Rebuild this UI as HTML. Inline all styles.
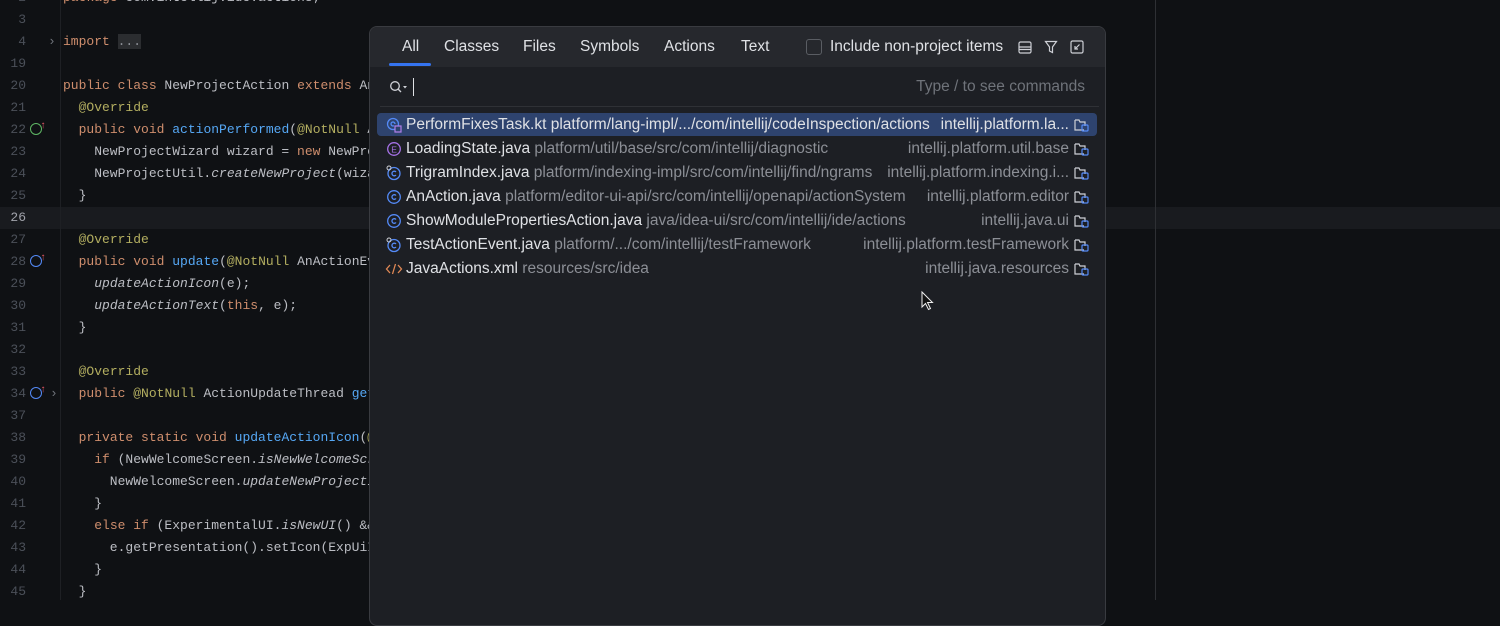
<!DOCTYPE html>
<html><head><meta charset="utf-8"><style>
*{margin:0;padding:0;box-sizing:border-box}
body{width:1500px;height:600px;background:#0f1114;overflow:hidden;position:relative;font-family:"Liberation Sans",sans-serif}
.ed{position:absolute;left:0;top:-13px;font-family:"Liberation Mono",monospace;font-size:13px;color:#bcbec4}
.ln{position:absolute;left:0;width:26px;text-align:right;color:#4b5059;font-size:13px}
.l{height:22px;line-height:22px;position:relative;white-space:pre}
.code{position:absolute;left:63px}
.k{color:#cf8e6d}.a{color:#b3ae60}.m{color:#56a8f5}.i{font-style:italic}
.gsep{position:absolute;left:60px;top:0;width:1px;height:600px;background:#1e2024}
.cur{position:absolute;left:0;top:207px;width:1500px;height:22px;background:#191b1f}
.vl{position:absolute;left:1155px;top:0;width:1px;height:600px;background:#2e3034}
.pop{position:absolute;left:369px;top:26px;width:737px;height:600px;background:#1d1f24;border:1px solid #393b40;border-radius:8px;overflow:hidden}
.hd{height:40px;background:#26282d;position:relative;font-size:15.5px;color:#dfe1e5}
.tab{position:absolute;top:11px}
.ul{position:absolute;left:19px;top:36px;width:42px;height:3px;background:#3574f0;border-radius:2px}
.srch{height:40px;border-bottom:1px solid #2f3136;position:relative;margin:0 6px 0 10px}
.row{position:absolute;left:7px;width:720px;height:23px;line-height:23px;font-size:15.5px;color:#dfe1e5;white-space:nowrap}
.row .p{color:#8c8f96}
.row .mod{position:absolute;right:28px;top:0;color:#8c8f96}
.row svg{position:absolute}
.sel{background:#2e436e;border-radius:4px}
.sel .p,.sel .mod{color:#dfe1e5}
</style></head><body>
<div class="cur"></div>
<div class="gsep"></div>
<div class="vl"></div>
<div class="ed">
<div class="l"><span class="ln">2</span><span class="code"><span class="k">package</span> com.intellij.ide.actions;</span></div>
<div class="l"><span class="ln">3</span></div>
<div class="l"><span class="ln">4</span><span style="position:absolute;left:48px;color:#6f737a">›</span><span class="code"><span class="k">import</span> <span style="background:#2b2d30;color:#8c8f96">...</span></span></div>
<div class="l"><span class="ln">19</span></div>
<div class="l"><span class="ln">20</span><span class="code"><span class="k">public class</span> NewProjectAction <span class="k">extends</span> AnAction {</span></div>
<div class="l"><span class="ln">21</span><span class="code">  <span class="a">@Override</span></span></div>
<div class="l"><span class="ln">22</span><span style="position:absolute;left:30px;top:4px;width:12px;height:12px;border:1.5px solid #5fb865;border-radius:50%"></span><span style="position:absolute;left:40px;top:-3px;color:#e55765;font-size:10px">↑</span><span class="code">  <span class="k">public void</span> <span class="m">actionPerformed</span>(<span class="a">@NotNull</span> AnActionEvent e) {</span></div>
<div class="l"><span class="ln">23</span><span class="code">    NewProjectWizard wizard = <span class="k">new</span> NewProjectWizard();</span></div>
<div class="l"><span class="ln">24</span><span class="code">    NewProjectUtil.<span class="i">createNewProject</span>(wizard);</span></div>
<div class="l"><span class="ln">25</span><span class="code">  }</span></div>
<div class="l"><span class="ln" style="color:#a1a3ab">26</span></div>
<div class="l"><span class="ln">27</span><span class="code">  <span class="a">@Override</span></span></div>
<div class="l"><span class="ln">28</span><span style="position:absolute;left:30px;top:4px;width:12px;height:12px;border:1.5px solid #548af7;border-radius:50%"></span><span style="position:absolute;left:40px;top:-3px;color:#e55765;font-size:10px">↑</span><span class="code">  <span class="k">public void</span> <span class="m">update</span>(<span class="a">@NotNull</span> AnActionEvent e) {</span></div>
<div class="l"><span class="ln">29</span><span class="code">    <span class="i">updateActionIcon</span>(e);</span></div>
<div class="l"><span class="ln">30</span><span class="code">    <span class="i">updateActionText</span>(<span class="k">this</span>, e);</span></div>
<div class="l"><span class="ln">31</span><span class="code">  }</span></div>
<div class="l"><span class="ln">32</span></div>
<div class="l"><span class="ln">33</span><span class="code">  <span class="a">@Override</span></span></div>
<div class="l"><span class="ln">34</span><span style="position:absolute;left:30px;top:4px;width:12px;height:12px;border:1.5px solid #548af7;border-radius:50%"></span><span style="position:absolute;left:40px;top:-3px;color:#e55765;font-size:10px">↑</span><span style="position:absolute;left:50px;color:#6f737a">›</span><span class="code">  <span class="k">public</span> <span class="a">@NotNull</span> ActionUpdateThread <span class="m">getActionUpdateThread</span>() {</span></div>
<div class="l"><span class="ln">37</span></div>
<div class="l"><span class="ln">38</span><span class="code">  <span class="k">private static void</span> <span class="m">updateActionIcon</span>(<span class="a">@NotNull</span> AnActionEvent e) {</span></div>
<div class="l"><span class="ln">39</span><span class="code">    <span class="k">if</span> (NewWelcomeScreen.<span class="i">isNewWelcomeScreen</span>(e)) {</span></div>
<div class="l"><span class="ln">40</span><span class="code">      NewWelcomeScreen.<span class="i">updateNewProjectIconIfWelcomeScreen</span>(e);</span></div>
<div class="l"><span class="ln">41</span><span class="code">    }</span></div>
<div class="l"><span class="ln">42</span><span class="code">    <span class="k">else if</span> (ExperimentalUI.<span class="i">isNewUI</span>() &amp;&amp; x) {</span></div>
<div class="l"><span class="ln">43</span><span class="code">      e.getPresentation().setIcon(ExpUiIcons.Add);</span></div>
<div class="l"><span class="ln">44</span><span class="code">    }</span></div>
<div class="l"><span class="ln">45</span><span class="code">  }</span></div>
</div>

<div class="pop">
<div class="hd">
<span class="tab" style="left:32px">All</span>
<span class="tab" style="left:74px">Classes</span>
<span class="tab" style="left:153px">Files</span>
<span class="tab" style="left:210px">Symbols</span>
<span class="tab" style="left:294px">Actions</span>
<span class="tab" style="left:371px">Text</span>
<div class="ul"></div>
<span style="position:absolute;left:436px;top:12px;width:16px;height:16px;border:1px solid #5a5d63;border-radius:3px"></span>
<span class="tab" style="left:460px">Include non-project items</span>
<svg style="position:absolute;left:648px;top:14px" width="14" height="13" viewBox="0 0 14 13" fill="none" stroke="#ced0d6" stroke-width="1.2"><rect x="1" y="1" width="12" height="11" rx="1.5"/><path d="M1 6h12M1 8.5h12"/></svg>
<svg style="position:absolute;left:674px;top:13px" width="14" height="14" viewBox="0 0 14 14" fill="none" stroke="#ced0d6" stroke-width="1.2"><path d="M1.5 1.5h11L8.5 7v5.5L5.5 11V7z"/></svg>
<svg style="position:absolute;left:700px;top:13px" width="14" height="14" viewBox="0 0 14 14" fill="none" stroke="#ced0d6" stroke-width="1.2"><rect x="1" y="1" width="12" height="12" rx="1.5"/><path d="M9.5 4.5L5 9M5 6v3h3"/></svg>
</div>
<div class="srch">
<svg style="position:absolute;left:9px;top:13px" width="20" height="14" viewBox="0 0 20 14" fill="none" stroke="#ced0d6" stroke-width="1.3"><circle cx="6" cy="6" r="4.3"/><path d="M9 9l3 3"/><path d="M14 6h4l-2 2.5z" fill="#ced0d6" stroke="none"/></svg>
<span style="position:absolute;left:33px;top:11px;width:1px;height:18px;background:#dfe1e5"></span>
<span style="position:absolute;right:14px;top:11px;font-size:15.5px;color:#6f737a">Type / to see commands</span>
</div>
<div class="row sel" style="top:86px"><svg style="left:9px;top:4px" width="16" height="16" viewBox="0 0 16 16" fill="none"><circle cx="7" cy="7" r="5.5" stroke="#548af7" stroke-width="1.3"/><path d="M9 7a2 2 0 1 0 -1 1.7" stroke="#548af7" stroke-width="1.3"/><path d="M9 9h6v6H9z" fill="#2e436e" stroke="#b07fe8" stroke-width="1.2"/></svg><span style="margin-left:29px">PerformFixesTask.kt <span class="p">platform/lang-impl/.../com/intellij/codeInspection/actions</span></span><span class="mod">intellij.platform.la...</span></div>
<div class="row" style="top:110px"><svg style="left:9px;top:4px" width="16" height="16" viewBox="0 0 16 16"><circle cx="8" cy="8" r="6.3" fill="none" stroke="#a571e6" stroke-width="1.3"/><text x="5.3" y="11.3" font-size="8.5" fill="#a571e6" font-family="Liberation Sans">E</text></svg><span style="margin-left:29px">LoadingState.java <span class="p">platform/util/base/src/com/intellij/diagnostic</span></span><span class="mod">intellij.platform.util.base</span></div>
<div class="row" style="top:134px"><svg style="left:9px;top:4px" width="16" height="16" viewBox="0 0 16 16" fill="none" stroke="#548af7" stroke-width="1.3"><circle cx="8" cy="8.5" r="6"/><path d="M10 7a2.3 2.3 0 1 0 0 3"/><circle cx="3" cy="3" r="2" stroke="#ced0d6" stroke-width="1"/></svg><span style="margin-left:29px">TrigramIndex.java <span class="p">platform/indexing-impl/src/com/intellij/find/ngrams</span></span><span class="mod">intellij.platform.indexing.i...</span></div>
<div class="row" style="top:158px"><svg style="left:9px;top:4px" width="16" height="16" viewBox="0 0 16 16" fill="none" stroke="#548af7" stroke-width="1.3"><circle cx="8" cy="8" r="6.3"/><path d="M10 6.5a2.3 2.3 0 1 0 0 3"/></svg><span style="margin-left:29px">AnAction.java <span class="p">platform/editor-ui-api/src/com/intellij/openapi/actionSystem</span></span><span class="mod">intellij.platform.editor</span></div>
<div class="row" style="top:182px"><svg style="left:9px;top:4px" width="16" height="16" viewBox="0 0 16 16" fill="none" stroke="#548af7" stroke-width="1.3"><circle cx="8" cy="8" r="6.3"/><path d="M10 6.5a2.3 2.3 0 1 0 0 3"/></svg><span style="margin-left:29px">ShowModulePropertiesAction.java <span class="p">java/idea-ui/src/com/intellij/ide/actions</span></span><span class="mod">intellij.java.ui</span></div>
<div class="row" style="top:206px"><svg style="left:9px;top:4px" width="16" height="16" viewBox="0 0 16 16" fill="none" stroke="#548af7" stroke-width="1.3"><circle cx="8" cy="8.5" r="6"/><path d="M10 7a2.3 2.3 0 1 0 0 3"/><circle cx="3" cy="3" r="2" stroke="#ced0d6" stroke-width="1"/></svg><span style="margin-left:29px">TestActionEvent.java <span class="p">platform/.../com/intellij/testFramework</span></span><span class="mod">intellij.platform.testFramework</span></div>
<div class="row" style="top:230px"><svg style="left:8px;top:4px" width="18" height="16" viewBox="0 0 18 16" fill="none" stroke="#e08855" stroke-width="1.3"><path d="M5 4L1.5 8 5 12M13 4l3.5 4L13 12M10.5 3L7.5 13"/></svg><span style="margin-left:29px">JavaActions.xml <span class="p">resources/src/idea</span></span><span class="mod">intellij.java.resources</span></div>
</div>
<svg style="position:absolute;left:0;top:0;pointer-events:none" width="1500" height="600">
<g fill="none" stroke-width="1.2">
<path d="M1075 120v10h9M1075 120h4l1 2h5v4" stroke="#ced0d6"/><rect x="1082" y="125" width="6" height="6" rx="1" stroke="#548af7"/>
<path d="M1075 144v10h9M1075 144h4l1 2h5v4" stroke="#ced0d6"/><rect x="1082" y="149" width="6" height="6" rx="1" stroke="#548af7"/>
<path d="M1075 168v10h9M1075 168h4l1 2h5v4" stroke="#ced0d6"/><rect x="1082" y="173" width="6" height="6" rx="1" stroke="#548af7"/>
<path d="M1075 192v10h9M1075 192h4l1 2h5v4" stroke="#ced0d6"/><rect x="1082" y="197" width="6" height="6" rx="1" stroke="#548af7"/>
<path d="M1075 216v10h9M1075 216h4l1 2h5v4" stroke="#ced0d6"/><rect x="1082" y="221" width="6" height="6" rx="1" stroke="#548af7"/>
<path d="M1075 240v10h9M1075 240h4l1 2h5v4" stroke="#ced0d6"/><rect x="1082" y="245" width="6" height="6" rx="1" stroke="#548af7"/>
<path d="M1075 264v10h9M1075 264h4l1 2h5v4" stroke="#ced0d6"/><rect x="1082" y="269" width="6" height="6" rx="1" stroke="#548af7"/>
</g>
<path d="M922 292v15l3.5-3.5 3 6 2-1-3-6h5z" fill="#111" stroke="#eee" stroke-width="1"/>
</svg>
</body></html>
